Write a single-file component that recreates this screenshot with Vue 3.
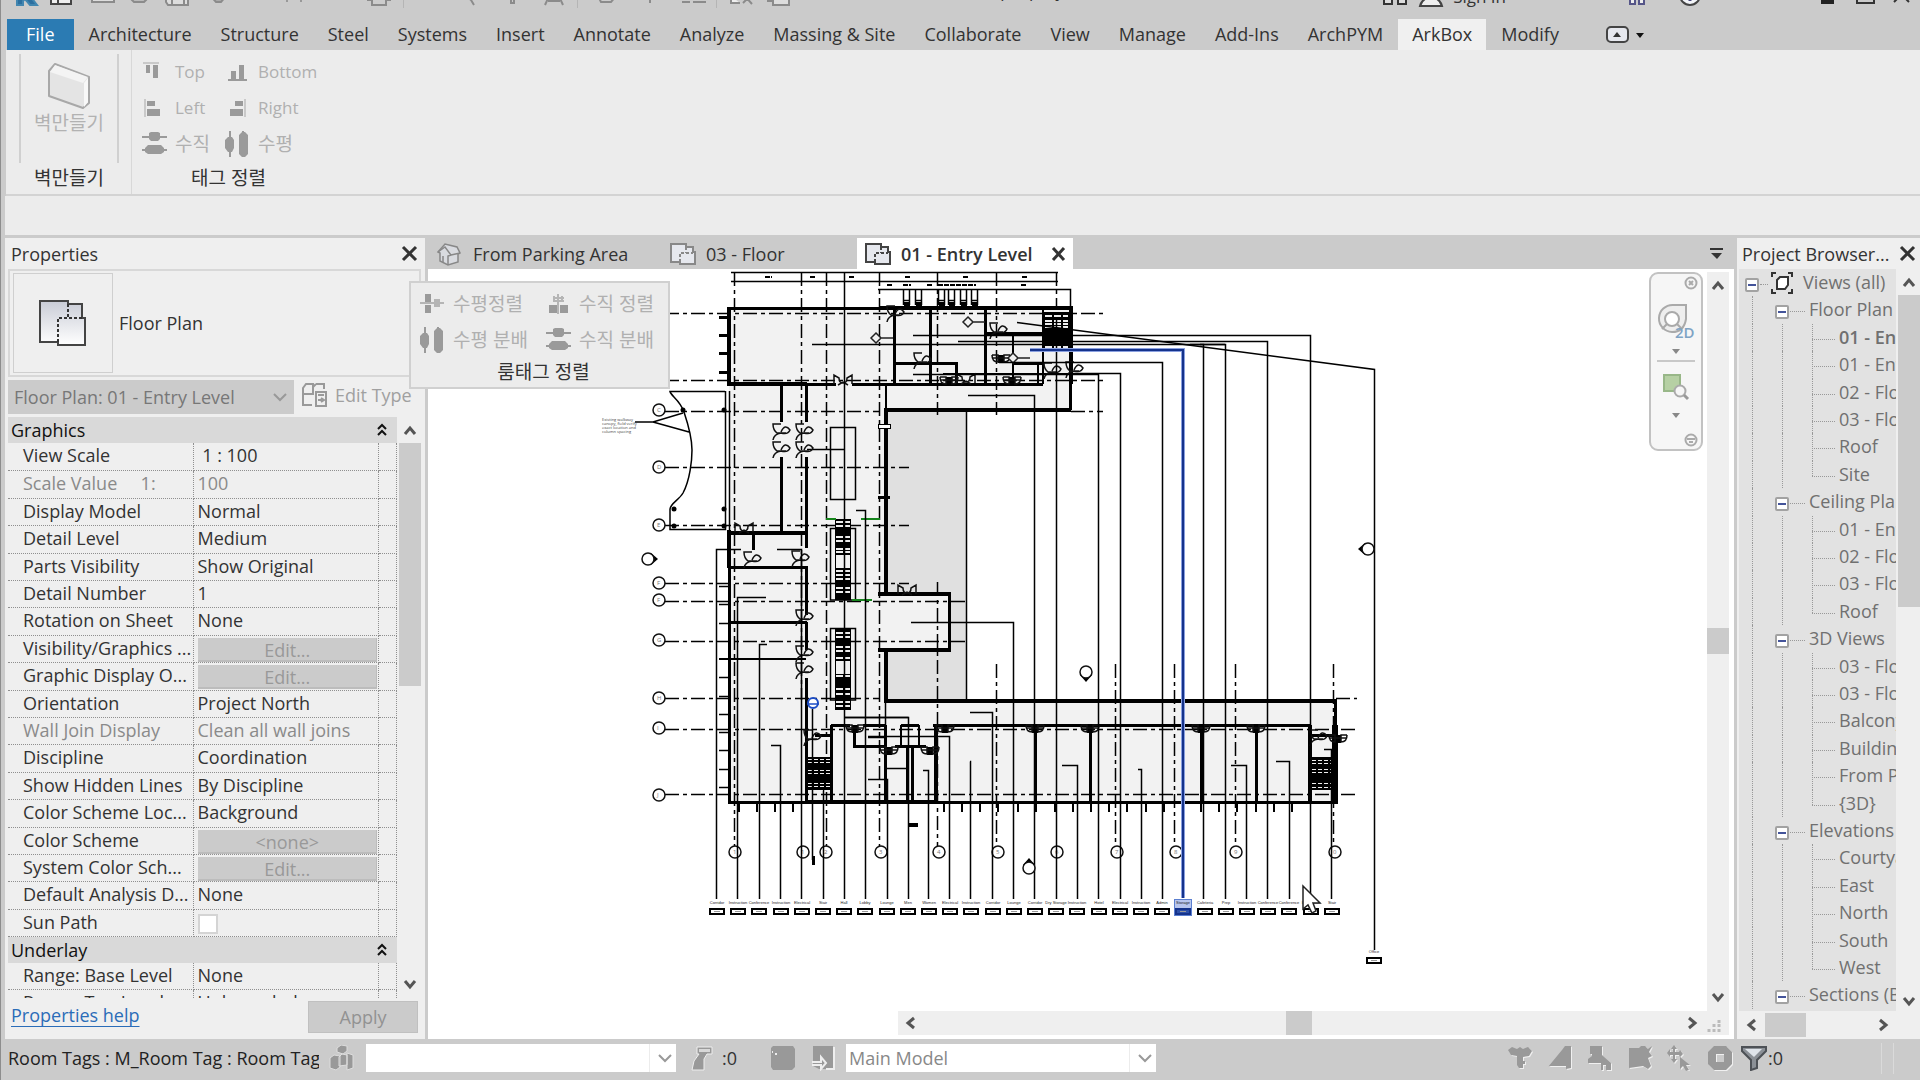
<template>
  <div class="window">
    <header class="titlebar">
      <div class="titlebar-row">
        <div class="quick-access">
          <button v-for="tool in quickTools" :key="tool.name" type="button" class="quick-button" :class="{ divided: tool.divided }"
            :style="{ width: tool.width + 'px' }" :aria-label="tool.name">
            <svg width="26" height="22" viewBox="0 0 26 22"><path :d="tool.path" :fill="tool.fill || 'none'" :stroke="tool.stroke || '#8b8b8b'" stroke-width="2" /></svg>
          </button>
        </div>
        <span class="doc-name">sample project</span>
        <div class="account">
          <button type="button" class="quick-button" aria-label="Search">
            <svg width="26" height="22" viewBox="0 0 26 22"><path d="M2 6h8v14H2zM16 6h8v14h-8zM10 9h6" fill="#ddd" stroke="#333" stroke-width="2" /></svg>
          </button>
          <button type="button" class="quick-button sign-in">
            <svg width="26" height="22" viewBox="0 0 26 22"><path d="M2 20q2-7 8-8a5 5 0 1 1 6 0q6 1 8 8z" fill="#eee" stroke="#444" stroke-width="2" /></svg>
            <span>Sign In</span>
          </button>
        </div>
        <div class="window-tools">
          <button type="button" class="quick-button" aria-label="App store">
            <svg width="18" height="22" viewBox="0 0 18 22"><path d="M2 8h5v10H2zM11 8h5v10h-5z" fill="#eee" stroke="#558" stroke-width="2" /></svg>
          </button>
          <button type="button" class="quick-button help" aria-label="Help">
            <svg width="24" height="22" viewBox="0 0 24 22"><circle cx="12" cy="9" r="10" fill="#f2f4f8" stroke="#444" stroke-width="2" /><path d="M12 12v3" stroke="#447" stroke-width="3" /></svg>
          </button>
          <button type="button" class="quick-button" aria-label="Minimize">
            <svg width="20" height="22" viewBox="0 0 20 22"><path d="M1 14h13v4H1z" fill="#222" /></svg>
          </button>
          <button type="button" class="quick-button" aria-label="Restore">
            <svg width="20" height="22" viewBox="0 0 20 22"><path d="M1 4h17v13H1z" fill="none" stroke="#333" stroke-width="2" /></svg>
          </button>
          <button type="button" class="quick-button" aria-label="Close">
            <svg width="20" height="22" viewBox="0 0 20 22"><path d="M2 1l15 15M17 1L2 16" stroke="#333" stroke-width="2" /></svg>
          </button>
        </div>
      </div>
    </header>

    <nav class="ribbon-tabs">
      <button type="button" class="ribbon-tab file">File</button>
      <button v-for="tab in ribbonTabs" :key="tab" type="button" class="ribbon-tab" :class="{ active: tab === activeTab }" @click="activeTab = tab">{{ tab }}</button>
      <button type="button" class="ribbon-collapse" aria-label="Collapse ribbon">
        <svg width="38" height="18" viewBox="0 0 38 18">
          <rect x="1" y="1" width="21" height="15" rx="4" fill="#e6e8ee" stroke="#444" stroke-width="2" />
          <path d="M7 11l4-5 4 5z" fill="#333" /><path d="M30 7h8l-4 5z" fill="#111" />
        </svg>
      </button>
    </nav>

    <section class="ribbon">
      <div class="ribbon-panel wall-panel">
        <button type="button" class="big-tool">
          <svg width="44" height="48" viewBox="0 0 44 48">
            <path d="M2 9l6-7 34 13v26l-6 5L2 34z" fill="#e4e4e4" stroke="#a8a8a8" stroke-width="2" stroke-linejoin="round" />
            <path d="M3 10l5-7 33 12-5 6z" fill="#f4f4f4" /><path d="M37 21l4-5v24l-4 5z" fill="#f8f8f8" />
          </svg>
          <span>벽만들기</span>
        </button>
        <p class="panel-title">벽만들기</p>
      </div>
      <div class="ribbon-panel align-panel">
        <div class="tool-grid">
          <button v-for="tool in alignTools" :key="tool.label" type="button" class="small-tool">
            <svg width="26" height="26" viewBox="0 0 26 26"><path :d="icons[tool.icon]" fill="#9a9a9a" /><path :d="thinLines[tool.icon]" stroke="#a6a6a6" stroke-width="1" /></svg>
            <span :class="{ korean: tool.korean }">{{ tool.label }}</span>
          </button>
        </div>
        <p class="panel-title">태그 정렬</p>
      </div>
    </section>
    <div class="options-bar"></div>

    <div class="workspace">
      <aside class="properties">
        <div class="panel-header">
          <h2>Properties</h2>
          <button type="button" aria-label="Close properties"><svg width="18" height="18" viewBox="0 0 18 18"><path d="M2 2l13 13M15 2L2 15" stroke="#333" stroke-width="3" /></svg></button>
        </div>
        <div class="type-selector">
          <button type="button" class="type-preview" aria-label="Type preview">
            <svg width="50" height="50" viewBox="0 0 50 50">
              <defs><linearGradient id="sheet" x2="0" y2="1"><stop stop-color="#c9ccd6" /><stop offset="1" stop-color="#fff" /></linearGradient></defs>
              <path d="M2 3h28v3h14v14h3v27H20v-3H2z" fill="url(#sheet)" stroke="#444" stroke-width="2" />
              <path d="M30 6v14M20 44V20h24" fill="none" stroke="#333" stroke-width="2" stroke-dasharray="3 2" />
            </svg>
          </button>
          <span>Floor Plan</span>
        </div>
        <div class="instance-row">
          <div class="select-box instance">
            <select v-model="instance" aria-label="Instance" disabled><option>Floor Plan: 01 - Entry Level</option></select>
            <svg width="14" height="9" viewBox="0 0 14 9"><path d="M1 1l6 6 6-6" fill="none" stroke="#999" stroke-width="2" /></svg>
          </div>
          <button type="button" class="edit-type" disabled>
            <svg width="26" height="26" viewBox="0 0 26 26" fill="none" stroke="#999" stroke-width="2"><path d="M12 2H4L1 6v17h9M1 12h10V3M14 2h8v5M11 5l3-3" /><path d="M14 10h10v14H14zM16 13h6M16 18h6m-3-2l3 2-3 2" /></svg>
            Edit Type
          </button>
        </div>
        <div class="property-area">
          <div class="property-list">
            <table v-for="group in propertyGroups" :key="group.name">
              <colgroup><col class="col-name"><col><col class="col-link"></colgroup>
              <thead>
                <tr><th colspan="3"><span>{{ group.name }}</span>
                  <svg width="12" height="14" viewBox="0 0 12 14"><path d="M2 6l4-4 4 4M2 12l4-4 4 4" fill="none" stroke="#111" stroke-width="2" /></svg></th></tr>
              </thead>
              <tbody>
                <tr v-for="row in group.rows" :key="row[0]" :class="{ locked: row[2] === 'locked' }">
                  <td class="name">{{ row[0] }}</td>
                  <td class="value">
                    <button v-if="row[2] === 'button'" type="button" disabled>{{ row[1] }}</button>
                    <input v-else-if="row[2] === 'check'" type="checkbox" :aria-label="row[0]">
                    <template v-else>{{ row[1] }}</template>
                  </td>
                  <td></td>
                </tr>
              </tbody>
            </table>
          </div>
          <div class="scroll-v">
            <button type="button" aria-label="Scroll up"><svg width="14" height="12" viewBox="0 0 14 12"><path :d="chevrons.up" class="chevron" /></svg></button>
            <div class="track"><div class="thumb properties-thumb"></div></div>
            <button type="button" aria-label="Scroll down"><svg width="14" height="12" viewBox="0 0 14 12"><path :d="chevrons.down" class="chevron" /></svg></button>
          </div>
        </div>
        <div class="properties-footer">
          <a href="#">Properties help</a>
          <button type="button" disabled>Apply</button>
        </div>
      </aside>

      <main class="view-area">
        <div class="doc-tabs">
          <button v-for="doc in documents" :key="doc.name" type="button" class="doc-tab" :class="[doc.kind, { active: doc.active }]">
            <svg v-if="doc.kind === 'house'" width="25" height="24" viewBox="0 0 25 24" stroke="#888" stroke-width="1.5"><path d="M2 10l7-8 12 3 3 6-2 1v8l-10 3-8-4v-8z" fill="#d9dbe0" /><path d="M2 10l7-5 6 8-3 1v9M15 13l9-2M7 14v6" fill="none" /></svg>
            <svg v-else width="26" height="22" viewBox="0 0 26 22" :stroke="doc.active ? '#444' : '#888'" stroke-width="2"><path d="M1 1h15v3h7v5h2v12H10v-2H1z" fill="#e6e8ee" /><path d="M16 4v6M10 19v-9h13" fill="none" stroke-dasharray="3 2" /></svg>
            <span>{{ doc.name }}</span>
            <svg v-if="doc.active" class="tab-close" width="16" height="16" viewBox="0 0 16 16"><path d="M2 2l11 12M13 2L2 14" stroke="#333" stroke-width="3" /></svg>
          </button>
          <button type="button" class="tab-menu" aria-label="Open views"><svg width="14" height="12" viewBox="0 0 14 12"><path d="M0 1h13" stroke="#333" stroke-width="2" /><path d="M1 5h11l-5 6z" fill="#333" /></svg></button>
        </div>

        <div class="canvas-row">
          <div class="canvas">
            <svg class="plan" width="1278" height="742" viewBox="428 269 1278 742" shape-rendering="crispEdges">
              <path d="M729 308H1071V410H886V593H949V650H886V700H1336V802H729z" fill="#f2f2f2" />
              <path d="M886 410h80v290h-80v-50h63v-57h-63z" fill="#e0e0e0" />
              <path d="M966.500 410v290" class="thin" />
              <!-- column grid -->
              <path v-for="d in gridLines" :key="d" :d="d" class="grid-line" />
              <g v-for="b in bubbles" :key="b.x + '-' + b.y" shape-rendering="auto">
                <circle :cx="b.x" :cy="b.y" r="6" class="bubble" /><text :x="b.x - 2" :y="b.y + 2" class="bubble-text">{{ b.t }}</text>
              </g>
              <!-- walls -->
              <path class="wall-4" d="M880 308H1071V384M729 307V385M727 383.5H807M729 530V568M727 533H808M884 409.5H1071M886 408V594M878 593.5H951M878 649.5H951M886 649V702M884 700.5H1337M936 725V803M1310 725V803M805 802H935" />
              <path class="wall-3" d="M729 308H880M1070 384V410M729 568V803M728 802H1336M807 384.500H836M852 384.500H1043M781 385V422M781 457V532M806 385V422M806 457V548M753 533V550M728 567H808M806 567V615M729 622H807M806 622V650M806 678V803M949 593V650M1335 700V726M933 725.500H1311M1035 725V802M1090 725V802M1201 725V802M1256 725V802M831 725V802M831 725.500H850M863 725.500H885M885 725V802M854 725V746H885M895 746H926M907 747V802M912 747V802M901 725.500H919M815 735H831M1310 735H1336" />
              <path class="wall-3" d="M894 308V384M930.500 308V384M985.500 308V384M985 333.500H1043M894 363.500H956V384M1013 363.500H1043" />
              <path class="wall-2" d="M1043 308V384M1013 333V384M1038 364V384M943 373.500H1099M719 659H806M885.500 385V410M901 725V746M919 725V746" />
              <path d="M1335 725V804" stroke="#000" stroke-width="6" />
              <!-- mullions -->
              <path v-for="y in [317, 335, 353, 372]" :key="'a' + y" :d="`M719 ${y}H730`" class="wall-3" />
              <path v-for="y in leftTicks" :key="'b' + y" :d="`M719 ${y}.5H729`" class="thin" />
              <path v-for="x in bottomTicks" :key="'c' + x" :d="`M${x} 803V812`" class="wall-2" />
              <!-- balcony -->
              <g shape-rendering="auto">
                <path d="M725 391.500H670C671 396 680 400 684 412S692 440 692 450S690 480 683 493C679 500 671 503 670 509V529.500H725.500V391M729.500 391V530M635 422H653L683 413M653 422L689 432" class="thin" />
                <circle v-for="p in anchors" :key="p.join()" :cx="p[0]" :cy="p[1]" r="2.500" />
                <text x="602" y="421" class="note">Existing walkway</text><text x="602" y="425" class="note">canopy, field verify</text>
                <text x="602" y="429" class="note">exact location and</text><text x="602" y="433" class="note">column spacing</text>
              </g>
              <!-- dimension strings -->
              <path class="thin" d="M731 272.500H1058M731 281.500H1058M878 289.500H1070.500V308M830.500 427.500H855.500V499.500H830.500zM830.500 528.500H855.500V600H830.500zM830.500 628.500H855.500V700H830.500zM807 449.500H844M885.500 700V725M868 737.500H885M885 768.500H907" />
              <path class="wall-2" d="M765 277h7M810 277h6M849 277h6M905 277h6M963 277h6M1022 277h6M887 285h5M903 285h8M927 285h5M938 285h38M1021 285h6" stroke-dasharray="5 1" />
              <g v-for="x in windowTags" :key="'w' + x"><path :d="`M${x}.5 289v16M${x + 6}.5 289v16M${x} 300.500h7`" class="thin" /><path :d="`M${x + 1} 302h6v4h-6z`" /></g>
              <!-- stairs and escalators -->
              <g v-for="s in stairs" :key="s.x + '-' + s.y">
                <rect :x="s.x" :y="s.y" :width="s.w" :height="s.h" />
                <path v-for="n in s.gaps" :key="n" :d="`M${s.x + 1} ${s.y + n}h${s.w - 2}`" stroke="#eee" :stroke-width="s.fine ? 1 : 2" :stroke-dasharray="s.fine ? '4 2' : '7 2'" />
                <rect v-if="s.landing" :x="s.x + 1" :y="s.y + s.landing" :width="s.w - 2" height="13" fill="#f2f2f2" />
              </g>
              <path d="M826 519h10M861 519h19M852 600h20" stroke="#16851c" stroke-width="2" />
              <rect x="878" y="424" width="12" height="4" fill="#fff" stroke="#000" stroke-width="1" />
              <path d="M878 497h12" class="wall-3" />
              <path d="M909 825h9" stroke="#000" stroke-width="4" />
              <path d="M813 856v9" stroke="#000" stroke-width="3" />
              <!-- doors -->
              <g shape-rendering="auto">
                <path v-for="p in doorPairs" :key="p.join()" class="door" :d="`M${p[0] - 9} ${p[1] + 3}v-9l5 3q0 5 4 5q4 0 4-5l5-3v9M${p[0] - 5} ${p[1] + 4}l5-3 5 3`" />
                <path v-for="p in sideDoors" :key="p.join()" class="door" :d="`M${p[0]} ${p[1] - 7}h-8q0 6 4 9h9M${p[0]} ${p[1] + 1}q4-9 9-2q-2 5-9 3q-7 1-8 7`" />
                <g v-for="p in doorKnots" :key="p.join()">
                  <path :d="`M${p[0] - 3} ${p[1] - 3}h6v8h-6z`" /><path class="door" :d="`M${p[0] - 9} ${p[1] - 3}h6v7q-6 0-6-7M${p[0] + 9} ${p[1] - 3}h-6v7q6 0 6-7M${p[0] - 9} ${p[1]}h18`" />
                </g>
                <path v-for="p in diamonds" :key="p.join()" :d="`M${p[0]} ${p[1] - 5}l5 5-5 5-5-5zM${p[0] + 5} ${p[1]}h12`" fill="#f2f2f2" stroke="#222" stroke-width="1.500" />
              </g>
              <!-- leaders -->
              <path v-for="l in leaders" :key="l.x" :d="`M${l.from} ${l.y}.5H${l.x}V899`" class="thin" />
              <path d="M844.500 272V899M812.500 709V860M812 344.500H1225M844.500 717.500H908.500" class="thin" />
              <path d="M1017 322.500L1374.500 369.500V950" class="thin" />
              <path d="M1030 350H1183V898" class="picked-halo" />
              <path d="M1030 350H1183V898" class="picked-leader" />
              <!-- elevation marks -->
              <g shape-rendering="auto">
                <g v-for="m in elevations" :key="m.turn" :transform="`translate(${m.x} ${m.y}) rotate(${m.turn})`"><path d="M3-6l7 6-7 6z" /><circle r="6" class="bubble" /></g>
                <circle cx="813" cy="703" r="5" fill="#fff" stroke="#1c4cc4" stroke-width="2" /><path d="M807 704h12" stroke="#1c4cc4" stroke-width="1.500" />
              </g>
              <!-- room tags -->
              <rect x="1174" y="899" width="17" height="16" fill="#b8c6ee" stroke="#5b7fd0" stroke-width="1" />
              <g v-for="tag in roomTags" :key="tag.x">
                <text :x="tag.x" :y="tag.y" class="room-name">{{ tag.name }}</text>
                <rect :x="tag.x - 7" :y="tag.y + 5" width="14" height="5" class="room-box" :class="{ picked: tag.picked }" />
                <path :d="`M${tag.x - 3} ${tag.y + 7.500}h6`" stroke="#999" stroke-width="1" />
              </g>
              <path d="M1303 886v23l5-4 4 8 4-2-3-8h7z" fill="#fff" stroke="#222" stroke-width="1.500" shape-rendering="auto" />
            </svg>

            <div class="nav-bar">
              <button type="button" class="nav-corner" aria-label="Close navigation bar"><svg width="14" height="14" viewBox="0 0 14 14" fill="none" stroke="#aaa" stroke-width="2"><circle cx="7" cy="7" r="5.500" /><path d="M5 5l4 4M9 5L5 9" /></svg></button>
              <button type="button" class="nav-tool" aria-label="Steering wheel">
                <svg width="40" height="38" viewBox="0 0 40 38"><path d="M17 2h13v14q-2 13-14 13A13 13 0 0 1 17 2z" fill="#eee" stroke="#aaa" stroke-width="2" /><circle cx="16" cy="16" r="7" fill="#fff" stroke="#aaa" stroke-width="2" /><path d="M11 21l-5 5M21 21l4 4" stroke="#aaa" stroke-width="2" /><text x="19" y="35" class="nav-2d">2D</text></svg>
              </button>
              <svg width="8" height="5" viewBox="0 0 8 5"><path d="M0 0h8L4 5z" fill="#888" /></svg>
              <hr>
              <button type="button" class="nav-tool" aria-label="Zoom region">
                <svg width="28" height="28" viewBox="0 0 28 28"><path d="M2 2h16v16H2z" fill="#b6d0a4" stroke="#98b788" stroke-width="2" /><circle cx="18" cy="18" r="5.500" fill="#f6f6f6" stroke="#aaa" stroke-width="2" /><path d="M22 22l4 4" stroke="#999" stroke-width="3" /></svg>
              </button>
              <svg width="8" height="5" viewBox="0 0 8 5"><path d="M0 0h8L4 5z" fill="#888" /></svg>
              <button type="button" class="nav-corner last" aria-label="Navigation options"><svg width="14" height="14" viewBox="0 0 14 14" fill="none" stroke="#aaa" stroke-width="2"><circle cx="7" cy="7" r="5.500" /><path d="M3 6h8M5 9h4" /></svg></button>
            </div>
          </div>
          <div class="scroll-v canvas-scroll">
            <button type="button" aria-label="Scroll up"><svg width="14" height="12" viewBox="0 0 14 12"><path :d="chevrons.up" class="chevron" /></svg></button>
            <div class="track"><div class="thumb canvas-thumb"></div></div>
            <button type="button" aria-label="Scroll down"><svg width="14" height="12" viewBox="0 0 14 12"><path :d="chevrons.down" class="chevron" /></svg></button>
          </div>
        </div>
        <div class="canvas-bottom">
          <div class="scroll-h">
            <button type="button" aria-label="Scroll left"><svg width="12" height="14" viewBox="0 0 12 14"><path :d="chevrons.left" class="chevron" /></svg></button>
            <div class="track"><div class="thumb"></div></div>
            <button type="button" aria-label="Scroll right"><svg width="12" height="14" viewBox="0 0 12 14"><path :d="chevrons.right" class="chevron" /></svg></button>
          </div>
          <svg class="grip" width="14" height="14" viewBox="0 0 14 14" fill="#bbb"><path d="M10 1h3v3h-3zM5 5h3v3H5zM10 5h3v3h-3zM0 10h3v3H0zM5 10h3v3H5zM10 10h3v3h-3z" /></svg>
        </div>

        <div class="floating-panel">
          <div class="floating-tools">
            <button v-for="tool in roomTagTools" :key="tool.label" type="button" class="small-tool">
              <svg width="26" height="26" viewBox="0 0 26 26"><path :d="icons[tool.icon]" fill="#9a9a9a" /><path :d="thinLines[tool.icon]" stroke="#b5b5b5" stroke-width="2" /></svg>
              <span class="korean">{{ tool.label }}</span>
            </button>
          </div>
          <p class="panel-title">룸태그 정렬</p>
        </div>
      </main>

      <aside class="browser">
        <div class="panel-header">
          <h2>Project Browser...</h2>
          <button type="button" aria-label="Close project browser"><svg width="18" height="18" viewBox="0 0 18 18"><path d="M2 2l13 13M15 2L2 15" stroke="#333" stroke-width="3" /></svg></button>
        </div>
        <div class="browser-body">
          <div class="browser-main">
            <ul class="tree">
              <li v-for="(node, i) in tree" :key="i" :class="['level-' + node.level, { current: node.current }]">
                <span v-for="n in node.level" :key="n" class="guide"></span>
                <span class="branch" :class="{ leaf: node.level === 2, end: node.end }">
                  <button v-if="node.level < 2" type="button" class="expander" aria-label="Collapse"></button>
                </span>
                <svg v-if="node.level === 0" width="22" height="22" viewBox="0 0 22 22" fill="none" stroke="#333" stroke-width="2"><path d="M1 5V1h4M17 1h4v4M21 17v4h-4M5 21H1v-4" /><path d="M6 8l3-3h8v8l-3 4H6z" fill="#fff" /></svg>
                <span class="label">{{ node.name }}</span>
              </li>
            </ul>
            <div class="scroll-h browser-scroll-h">
              <button type="button" aria-label="Scroll left"><svg width="12" height="14" viewBox="0 0 12 14"><path :d="chevrons.left" class="chevron" /></svg></button>
              <div class="track"><div class="thumb"></div></div>
              <button type="button" aria-label="Scroll right"><svg width="12" height="14" viewBox="0 0 12 14"><path :d="chevrons.right" class="chevron" /></svg></button>
            </div>
          </div>
          <div class="scroll-v">
            <button type="button" aria-label="Scroll up"><svg width="14" height="12" viewBox="0 0 14 12"><path :d="chevrons.up" class="chevron" /></svg></button>
            <div class="track"><div class="thumb browser-thumb"></div></div>
            <button type="button" aria-label="Scroll down"><svg width="14" height="12" viewBox="0 0 14 12"><path :d="chevrons.down" class="chevron" /></svg></button>
          </div>
        </div>
      </aside>
    </div>

    <footer class="status-bar">
      <span class="hint">Room Tags : M_Room Tag : Room Tag</span>
      <svg width="26" height="26" viewBox="0 0 26 26" fill="#999" stroke="#ddd" stroke-width="1"><path d="M8 3l4-3 6 1v5l-4 3-6-2zM1 13l4-3 6 1v11l-4 3-6-2zM10 12l3-3 5 1v10l-8 1zM18 8l6 2v13l-6 2z" /></svg>
      <div class="select-box status-select">
        <select aria-label="Active workset"><option></option></select>
        <svg width="14" height="9" viewBox="0 0 14 9"><path d="M1 1l6 6 6-6" fill="none" stroke="#999" stroke-width="2" /></svg>
      </div>
      <div class="requests">
        <svg width="24" height="26" viewBox="0 0 24 26"><path d="M7 2h15v7h-5l-3 5v11H2l2-9 5-7H7z" fill="#999" stroke="#eee" stroke-width="1" /><path d="M9 4h11v3H9z" fill="#d8d8d8" /></svg>
        <span>:0</span>
      </div>
      <svg class="options-icon" width="26" height="26" viewBox="0 0 26 26"><path d="M3 1h20l2 3v18l-3 3H3l-2-3V3z" fill="#999" /><path d="M2 7h1M5 9h2" stroke="#eee" stroke-width="2" /></svg>
      <svg class="pick-icon" width="24" height="26" viewBox="0 0 24 26"><path d="M2 1h20v23H8l-6-3z" fill="#999" /><path d="M23 2v22h-8M1 17h9v-5l5 6-5 6v-4H1" fill="none" stroke="#eee" stroke-width="2" /></svg>
      <div class="select-box status-select">
        <select v-model="designOption" aria-label="Design option"><option>Main Model</option></select>
        <svg width="14" height="9" viewBox="0 0 14 9"><path d="M1 1l6 6 6-6" fill="none" stroke="#999" stroke-width="2" /></svg>
      </div>
      <div class="select-toggles">
        <button v-for="item in statusIcons" :key="item.name" type="button" :aria-label="item.name">
          <svg width="26" height="26" viewBox="0 0 26 26"><path :d="item.path" transform="translate(1 1)" fill="#f0f0f0" /><path :d="item.path" fill="#999" fill-rule="evenodd" /></svg>
        </button>
        <button type="button" class="filter">
          <svg width="26" height="26" viewBox="0 0 26 26"><path d="M1 2h24v4l-9 9v8l-6 2V15L1 6z" fill="#8b9096" stroke="#4d5156" stroke-width="2" /><path d="M4 4h17l-8 8z" fill="#dfe4ea" /></svg>
          <span>:0</span>
        </button>
      </div>
      <div class="status-grip"></div>
    </footer>
  </div>
</template>

<script setup>
import { ref } from "vue";

const activeTab = ref("ArkBox");
const instance = ref("Floor Plan: 01 - Entry Level");
const designOption = ref("Main Model");

const ribbonTabs = [
  "Architecture", "Structure", "Steel", "Systems", "Insert", "Annotate", "Analyze", "Massing & Site",
  "Collaborate", "View", "Manage", "Add-Ins", "ArchPYM", "ArkBox", "Modify",
];

const quickTools = [
  { name: "Revit", width: 36, path: "M4 2h6v7l6-7h5l-4 8 7 9h-7l-5-6-2 2v4H4z", fill: "#2c6f9f", stroke: "#4186b0" },
  { name: "Home", width: 34, path: "M3 3h20v15H3zM10 3v15", fill: "#eee", stroke: "#444" },
  { name: "Open", width: 50, path: "M2 3h22v13H2z", fill: "#ddd" },
  { name: "Save", width: 24, path: "M4 3h16v10l-3 3H7l-3-3z", fill: "#bbb" },
  { name: "Save As", width: 50, path: "M2 3h22v16H4l-2-3zM8 12h12v7H8z", fill: "#ddd" },
  { name: "Sync", width: 30, path: "M5 8l4-5h10l3 7-5 6h-5z", fill: "#aaa" },
  { name: "Undo", width: 123, path: "M6 13v3M20 13v3", stroke: "#999" },
  { name: "Print", width: 48, path: "M2 5h22v9h-4v5H6v-5H2zM6 12h14", fill: "#ccc" },
  { name: "Measure", width: 46, path: "M1 12h24M2 8v4", divided: true },
  { name: "Dimension", width: 44, path: "M9 11l4 3 3 5" },
  { name: "Tag", width: 38, path: "M12 10v7h3v-7" },
  { name: "Text", width: 46, path: "M4 19l6-13h6l6 13M7 15h12" },
  { name: "3D View", width: 57, path: "M4 8l4 8h10l5-6", fill: "#ccc", divided: true },
  { name: "Section", width: 38, path: "M10 11v6M10 13h7" },
  { name: "Thin Lines", width: 44, path: "M1 16h8M12 16h13M12 12h13" },
  { name: "Close Inactive", width: 51, path: "M2 10v7h9M14 17l8-8M15 9l8 9", fill: "#eee", divided: true },
  { name: "Switch", width: 22, path: "M8 10h16v9H8zM3 10v5h5", fill: "#ddd" },
];

// filled part of the alignment icons
const icons = {
  top: "M5 6h4v8H5zM12 6h5v13h-5z",
  bottom: "M7 12h5v8H7zM15 6h5v14h-5zM4 20h19v2H4z",
  left: "M6 6h8v5H6zM6 14h13v7H6z",
  right: "M11 6h8v5h-8zM6 14h13v7H6z",
  vertical: "M8 2l2-1h7l2 1v6l-2 2h-7l-2-2zM4 17l3-3h13l3 3v4l-3 2H7l-3-2zM1 5h25v2H1zM1 18h25v2H1z",
  horizontal: "M1 9l3-3h4l2 3v8l-2 4H4l-3-4zM5 0h2v26H5zM15 4l3-3h3l3 3v19l-3 3h-3l-3-3zM18 0h2v26h-2z",
  alignH: "M6 3h6v8H6zM6 14h6v8H6z",
  alignV: "M4 14h8v8H4zM15 14h8v8h-8z",
};
const thinLines = {
  top: "M2 4h16", left: "M4 4v18", right: "M21 4v18", alignH: "M1 12h24M16 8v8M18 8v8M20 8v8", alignV: "M13 3v20M9 5v6M17 5v6M8 7h11M8 10h11",
};
const alignTools = [
  { label: "Top", icon: "top" }, { label: "Bottom", icon: "bottom" },
  { label: "Left", icon: "left" }, { label: "Right", icon: "right" },
  { label: "수직", icon: "vertical", korean: true }, { label: "수평", icon: "horizontal", korean: true },
];
const roomTagTools = [
  { label: "수평정렬", icon: "alignH" }, { label: "수직 정렬", icon: "alignV" },
  { label: "수평 분배", icon: "horizontal" }, { label: "수직 분배", icon: "vertical" },
];
const chevrons = { up: "M2 10l5-6 5 6", down: "M2 2l5 6 5-6", left: "M9 2L3 7l6 5", right: "M3 2l6 5-6 5" };

const propertyGroups = [
  {
    name: "Graphics",
    rows: [
      ["View Scale", "\u00a01 : 100"],
      ["Scale Value\u00a0\u00a0\u00a0\u00a0\u00a01:", "100", "locked"],
      ["Display Model", "Normal"],
      ["Detail Level", "Medium"],
      ["Parts Visibility", "Show Original"],
      ["Detail Number", "1"],
      ["Rotation on Sheet", "None"],
      ["Visibility/Graphics ...", "Edit...", "button"],
      ["Graphic Display O...", "Edit...", "button"],
      ["Orientation", "Project North"],
      ["Wall Join Display", "Clean all wall joins", "locked"],
      ["Discipline", "Coordination"],
      ["Show Hidden Lines", "By Discipline"],
      ["Color Scheme Loc...", "Background"],
      ["Color Scheme", "<none>", "button"],
      ["System Color Sch...", "Edit...", "button"],
      ["Default Analysis D...", "None"],
      ["Sun Path", "", "check"],
    ],
  },
  { name: "Underlay", rows: [["Range: Base Level", "None"], ["Range: Top Level", "Unbounded"]] },
];

const documents = [
  { name: "From Parking Area", kind: "house" },
  { name: "03 - Floor", kind: "plan-tab" },
  { name: "01 - Entry Level", kind: "plan-tab", active: true },
];

const tree = [
  { level: 0, name: "Views (all)" },
  { level: 1, name: "Floor Plan" },
  { level: 2, name: "01 - Entry Level", current: true },
  { level: 2, name: "01 - Entry Level" },
  { level: 2, name: "02 - Floor" },
  { level: 2, name: "03 - Floor" },
  { level: 2, name: "Roof" },
  { level: 2, name: "Site", end: true },
  { level: 1, name: "Ceiling Plans" },
  { level: 2, name: "01 - Entry Level" },
  { level: 2, name: "02 - Floor" },
  { level: 2, name: "03 - Floor" },
  { level: 2, name: "Roof", end: true },
  { level: 1, name: "3D Views" },
  { level: 2, name: "03 - Floor" },
  { level: 2, name: "03 - Floor" },
  { level: 2, name: "Balcony" },
  { level: 2, name: "Building" },
  { level: 2, name: "From Parking" },
  { level: 2, name: "{3D}", end: true },
  { level: 1, name: "Elevations" },
  { level: 2, name: "Courtyard" },
  { level: 2, name: "East" },
  { level: 2, name: "North" },
  { level: 2, name: "South" },
  { level: 2, name: "West", end: true },
  { level: 1, name: "Sections (Building)" },
];

// floor plan geometry, in drawing units
const gridLines = [
  "M734.5 272V846", "M801.5 272V700", "M826.5 272V846", "M879.5 272V846", "M937.5 272V415", "M937.5 582V846",
  "M996.5 272V415", "M996.5 664V846", "M1056.5 272V308", "M1115.5 664V846", "M1174.5 664V846", "M1235.5 664V846", "M1333.5 664V846",
  "M665 313.5H1103", "M665 380.5H1103", "M665 411.5H880", "M1071 411.5H1103", "M665 467.5H909", "M665 525.5H909", "M665 583.5H909",
  "M665 601.5H965", "M665 641.5H965", "M665 698.5H880", "M1336 698.5H1357", "M665 729.5H1357", "M665 794.5H1357",
];
const bubbles = [
  ...[410, 467, 525, 583, 600, 640, 698, 728, 795].map((y, i) => ({ x: 659, y, t: "CDEFFGHIJ"[i] })),
  ...[735, 803, 826, 881, 939, 998, 1057, 1117, 1176, 1236, 1335].map((x, i) => ({ x, y: 852, t: "11234567890"[i] })),
];
const leftTicks = [586, 604, 623, 677, 696, 714, 732, 750, 769, 787];
const bottomTicks = [739, 757, 775, 793, 944, 962, 980, 998, 1018, 1036, 1055, 1073, 1091, 1109, 1127, 1146, 1164, 1201, 1219, 1237, 1256, 1274, 1292];
const anchors = [[683, 410], [724, 410], [674, 509], [674, 526], [724, 509], [724, 526]];
const windowTags = [903, 915, 938, 948, 960, 971];
const stairs = [
  { x: 835, y: 519, w: 16, h: 81, gaps: [3, 7, 18, 22, 30, 33, 52, 56, 60, 69, 73], landing: 36 },
  { x: 835, y: 629, w: 16, h: 81, gaps: [4, 8, 18, 22, 29, 47, 60, 65, 73, 77], landing: 32 },
  { x: 807, y: 757, w: 25, h: 33, gaps: [2, 5, 13, 16, 26, 29], fine: true },
  { x: 1044, y: 312, w: 25, h: 40, gaps: [4, 9, 12, 15, 35] },
  { x: 1311, y: 757, w: 22, h: 33, gaps: [3, 6, 12, 15, 26, 30], fine: true },
];
const doorPairs = [[843, 381], [744, 529], [907, 591], [966, 380]];
const sideDoors = [[781, 431], [781, 449], [804, 431], [804, 449], [752, 559], [800, 558], [804, 617], [804, 653], [804, 670], [812, 737], [895, 313], [922, 360], [998, 330], [1052, 370], [1074, 369], [1318, 737]];
const doorKnots = [[855, 728], [945, 728], [1035, 728], [1090, 728], [1201, 728], [1256, 728], [889, 750], [930, 750], [1338, 738], [949, 380], [1012, 380], [1001, 358]];
const diamonds = [[876, 338], [968, 322], [1013, 358]];

const leaders = [
  { x: 716.5, y: 549, from: 741 }, { x: 737.5, y: 597, from: 766 }, { x: 759.5, y: 644, from: 767 }, { x: 780.5, y: 745, from: 771 },
  { x: 801.5, y: 549, from: 777 }, { x: 823.5, y: 790, from: 823 }, { x: 865.5, y: 510, from: 856 }, { x: 887.5, y: 779, from: 868 },
  { x: 908.5, y: 717, from: 844 }, { x: 928.5, y: 770, from: 923 }, { x: 949.5, y: 736, from: 868 }, { x: 970.5, y: 761, from: 970 },
  { x: 992.5, y: 712, from: 970 }, { x: 1013.5, y: 622, from: 911 }, { x: 1034.5, y: 395, from: 968 }, { x: 1056.5, y: 320, from: 1056 },
  { x: 1077.5, y: 765, from: 1062 }, { x: 1098.5, y: 374, from: 913 }, { x: 1120.5, y: 373, from: 1070 }, { x: 1141.5, y: 769, from: 1138 },
  { x: 1162.5, y: 362, from: 999 }, { x: 1203.5, y: 344, from: 1190 }, { x: 1225.5, y: 344, from: 1200 }, { x: 1246.5, y: 765, from: 1231 },
  { x: 1267.5, y: 341, from: 958 }, { x: 1289.5, y: 761, from: 1276 }, { x: 1310.5, y: 335, from: 913 }, { x: 1331.5, y: 749, from: 1324 },
];
const elevations = [
  { x: 648, y: 559, turn: 0 }, { x: 1086, y: 672, turn: 90 }, { x: 1368, y: 549, turn: 180 }, { x: 1029, y: 868, turn: 270 },
];
const roomNames = [
  "Corridor", "Instruction", "Conference", "Instruction", "Electrical", "Stair", "Hall", "Lobby", "Lounge", "Men", "Women", "Electrical",
  "Instruction", "Corridor", "Lounge", "Corridor", "Dry Storage", "Instruction", "Hotel", "Electrical", "Instruction", "Admin", "Storage",
  "Cafeteria", "Prep", "Instruction", "Conference", "Conference", "Instruction", "Stair",
];
const roomTags = [
  ...roomNames.map((name, i) => ({ name, x: Math.round(717 + i * 21.2), y: 904, picked: i === 22 })),
  { name: "Office", x: 1374, y: 953 },
];

const statusIcons = [
  { name: "Select links", path: "M1 5l4-3 5 2 3-2 3 2 5-2 4 4-3 5-6 1v4h2v3h-2v4h-4l-2-3v-9l-6-1z" },
  { name: "Select underlay", path: "M1 22L15 5l3-4h6v22l-5 1v-3H2z" },
  { name: "Select pinned", path: "M3 1h12v9l9 8v7h-5v-5h-3v5h-2v-7H1v-4l4-3V9H3z" },
  { name: "Select by face", path: "M2 3h10l2-2h4l3 3 4-3-3 6 3 4-4 2 3 8-3 3-5-3-14 2z" },
  { name: "Drag on selection", path: "M7 0l3 4H8v3h4l1-2 3 4-3 3-1-2H8v4h2l-3 4-3-4h2v-4H3v2L0 8l3-4v3h3V4H4zM13 12l10 8h-4l3 5-3 1-3-5-3 3z" },
  { name: "Background processes", path: "M7 1h12l6 6v12l-6 6H7l-6-6V7zM9 9v8h8V9z" },
];
</script>

<style>
body {
  margin: 0;
}
</style>

<style scoped>
.window {
  height: 100vh;
  box-sizing: border-box;
  display: flex;
  flex-direction: column;
  overflow: hidden;
  border-left: 1px solid #8d8d8d;
  background: #cbcbcb;
  color: #333;
  font: 18px/26px "Open Sans", "Noto Sans CJK KR", sans-serif;
}

button, select, input {
  font: inherit;
  color: inherit;
}
button {
  padding: 0;
  border: 0;
  background: none;
}
svg {
  display: block;
  flex: none;
}
p, h2 {
  margin: 0;
}

.titlebar {
  height: 19px;
  flex: none;
  overflow: hidden;
}
.titlebar-row {
  height: 32px;
  margin-top: -19px;
  display: flex;
  align-items: center;
  font-size: 17px;
}
.quick-access {
  display: flex;
  padding-left: 7px;
  flex: none;
}
.quick-button {
  display: flex;
  justify-content: center;
  box-sizing: border-box;
}
.quick-button.divided {
  border-left: 1px solid #b5b5b5;
}
.doc-name {
  flex: 1;
  align-self: flex-start;
  padding-left: 178px;
  line-height: 20px;
}
.account {
  display: flex;
  gap: 10px;
  margin-right: 122px;
}
.sign-in {
  align-items: center;
  gap: 9px;
}
.window-tools {
  display: flex;
  gap: 16px;
  padding-right: 8px;
}
.window-tools .help {
  margin: 0 102px 0 16px;
}

.ribbon-tabs {
  display: flex;
  flex: none;
  height: 31px;
  gap: 1px;
  padding-left: 6px;
}
.ribbon-tab {
  padding: 0 14px 2px;
  line-height: 28px;
}
.ribbon-tab.file {
  padding: 0 19px 2px;
  background: #2b7bb3;
  color: #fff;
}
.ribbon-tab.active {
  background: #f0f0f0;
}
.ribbon-collapse {
  margin-left: 32px;
}

.ribbon {
  flex: none;
  display: flex;
  height: 144px;
  margin-left: 5px;
  border-bottom: 2px solid #d3d3d3;
  background: #ececec;
}
.ribbon-panel {
  display: flex;
  flex-direction: column;
  justify-content: space-between;
  align-items: center;
  box-sizing: border-box;
  padding: 4px 12px 2px;
}
.wall-panel {
  padding-left: 13px;
  border-right: 1px solid #d8d8d8;
}
.align-panel {
  padding-left: 9px;
}
.big-tool {
  display: flex;
  flex-direction: column;
  align-items: center;
  width: 100px;
  box-sizing: border-box;
  height: 109px;
  padding-top: 8px;
  border: solid #d0d0d0;
  border-width: 0 2px;
  color: #b2b2b2;
  font-size: 19px;
}
.panel-title {
  font-size: 19px;
  line-height: 28px;
  text-align: center;
}
.tool-grid {
  display: grid;
  grid-template-columns: 83px 92px;
  grid-auto-rows: 36px;
}
.small-tool {
  display: flex;
  align-items: center;
  gap: 8px;
  color: #b0b0b0;
  font-size: 17px;
  white-space: nowrap;
}
.korean {
  font-size: 19px;
}

.options-bar {
  flex: none;
  height: 39px;
  margin-left: 4px;
  border-bottom: 3px solid #cbcbcb;
  background: #ececec;
}

.workspace {
  flex: 1;
  min-height: 0;
  display: flex;
  gap: 3px;
  padding-left: 4px;
}
.panel-header {
  display: flex;
  flex: none;
  height: 31px;
  justify-content: space-between;
  align-items: center;
  padding: 0 6px;
}
.panel-header h2 {
  font: inherit;
  white-space: nowrap;
}

.properties {
  width: 420px;
  flex: none;
  display: flex;
  flex-direction: column;
  background: #efefef;
}
.type-selector {
  display: flex;
  align-items: center;
  gap: 6px;
  margin: 0 4px 0 3px;
  padding: 2px 3px;
  border: 2px solid #d8d8d8;
}
.type-preview {
  display: grid;
  place-items: center;
  width: 100px;
  height: 100px;
  box-sizing: border-box;
  border: 1px solid #cfcfcf;
}
.instance-row {
  display: flex;
  gap: 8px;
  padding: 3px;
}
.select-box {
  position: relative;
}
.select-box select {
  appearance: none;
  width: 100%;
  height: 100%;
  box-sizing: border-box;
  padding: 0 30px 0 6px;
  border: 0;
  border-radius: 0;
  background: #fff;
  opacity: 1;
}
.select-box svg {
  position: absolute;
  right: 7px;
  top: 50%;
  margin-top: -4px;
  pointer-events: none;
}
.instance {
  width: 286px;
  height: 34px;
}
.instance select {
  background: #cbcbcb;
  color: #777;
}
.edit-type {
  display: flex;
  align-items: center;
  height: 30px;
  gap: 7px;
  color: #a0a0a0;
}
.property-area {
  flex: 1;
  min-height: 0;
  display: flex;
  gap: 2px;
  margin: 0 4px 0 3px;
}
.property-list {
  flex: 1;
  overflow: hidden;
}
.property-list table {
  width: 100%;
  table-layout: fixed;
  border-collapse: collapse;
}
.col-name {
  width: 185px;
}
.col-link {
  width: 18px;
}
.property-list th {
  height: 26px;
  padding: 0 9px 0 3px;
  background: #d9d9d9;
  color: #111;
  font-weight: normal;
  text-align: left;
}
.property-list th span {
  float: left;
}
.property-list th svg {
  float: right;
  margin-top: 6px;
}
.property-list td {
  box-sizing: border-box;
  height: 27px;
  padding: 0;
  border: dotted #8f8f8f;
  border-width: 0 1px 1px 0;
  line-height: 24px;
  vertical-align: top;
  white-space: nowrap;
  overflow: hidden;
}
.property-list tr:nth-child(5n + 2) td,
.property-list tr:nth-child(5n + 4) td {
  height: 28px;
}
.property-list .name {
  padding-left: 15px;
}
.property-list .value {
  padding-left: 4px;
}
.property-list .locked {
  color: #8a8a8a;
}
.property-list td button {
  display: block;
  width: 100%;
  height: 24px;
  margin-top: 2px;
  background: #cbcbcb;
  box-shadow: inset -1px -2px #bcbcbc;
  color: #999;
  line-height: 24px;
}
.property-list td:has(button) {
  padding: 0 1px 0 2px;
}
.property-list input {
  appearance: none;
  display: block;
  width: 20px;
  height: 20px;
  margin: 4px 0 0;
  border: 2px solid #d4d4d4;
  background: #fff;
}
.properties-footer {
  display: flex;
  flex: none;
  justify-content: space-between;
  box-sizing: border-box;
  height: 41px;
  padding: 3px 7px 0 6px;
}
.properties-footer a {
  height: 28px;
  color: #2a6cb8;
  line-height: 28px;
  text-underline-offset: 4px;
}
.properties-footer button {
  width: 110px;
  height: 32px;
  border: 1px solid #c0c0c0;
  background: #cbcbcb;
  color: #929292;
}

.scroll-v {
  display: flex;
  flex-direction: column;
  flex: none;
  width: 22px;
  background: #efefef;
}
.scroll-v button, .scroll-h button {
  flex: none;
  display: grid;
  place-items: center;
}
.scroll-v button {
  height: 26px;
}
.scroll-h {
  display: flex;
  height: 24px;
  background: #efefef;
}
.scroll-h button {
  width: 26px;
}
.track {
  flex: 1;
  display: flex;
}
.scroll-v .track {
  flex-direction: column;
}
.thumb {
  background: #cbcbcb;
}
.chevron {
  fill: none;
  stroke: #555;
  stroke-width: 3;
}
.properties-thumb {
  height: 46%;
}

.view-area {
  position: relative;
  flex: 1;
  min-width: 0;
  display: flex;
  flex-direction: column;
  background: #fff;
}
.doc-tabs {
  flex: none;
  display: flex;
  height: 31px;
  background: #cbcbcb;
}
.doc-tab {
  display: flex;
  align-items: center;
  gap: 12px;
  white-space: nowrap;
}
.doc-tab.house {
  width: 234px;
  padding-left: 8px;
}
.doc-tab.plan-tab {
  width: 195px;
  padding-left: 8px;
  gap: 10px;
}
.doc-tab.active {
  width: 216px;
  padding-right: 6px;
  background: #fff;
  font-weight: 600;
}
.tab-close {
  margin-left: auto;
}
.tab-menu {
  margin: 0 10px 0 auto;
}
.canvas-row {
  flex: 1;
  min-height: 0;
  display: flex;
}
.canvas {
  position: relative;
  flex: 1;
  min-width: 0;
  overflow: hidden;
}
.canvas-scroll {
  margin: 3px 5px 0 0;
}
.canvas-thumb {
  height: 26px;
  margin-top: 330px;
}
.canvas-bottom {
  display: flex;
  flex: none;
  height: 28px;
  padding-left: 36%;
}
.canvas-bottom .scroll-h {
  flex: 1;
}
.canvas-bottom .thumb {
  width: 26px;
  margin-left: 48%;
}
.grip {
  width: 24px;
  padding: 8px 5px 2px 0;
  box-sizing: border-box;
  height: 24px;
  margin-right: 5px;
  background: #efefef;
}

.thin {
  fill: none;
  stroke: #000;
  stroke-width: 1.5;
  shape-rendering: auto;
}
.picked-halo, .picked-leader {
  fill: none;
  stroke: #8aa0e0;
  stroke-width: 4;
}
.picked-leader {
  stroke: #15338c;
  stroke-width: 2;
}
.wall-2, .wall-3, .wall-4 {
  fill: none;
  stroke: #000;
  stroke-width: 2;
}
.wall-3 {
  stroke-width: 3;
}
.wall-4 {
  stroke-width: 4;
}
.grid-line {
  fill: none;
  stroke: #000;
  stroke-width: 1.5;
  stroke-dasharray: 14 4 4 4;
  shape-rendering: auto;
}
.bubble {
  fill: #fff;
  stroke: #111;
  stroke-width: 1.5;
}
.door {
  fill: none;
  stroke: #111;
  stroke-width: 1.5;
}
.bubble-text {
  fill: #777;
  font-size: 6px;
}
.note {
  fill: #444;
  font-size: 4px;
}
.room-name {
  fill: #222;
  font: 4px "Liberation Sans", sans-serif;
  text-anchor: middle;
}
.room-box {
  fill: #fff;
  stroke: #000;
  stroke-width: 1.5;
}
.room-box.picked {
  fill: #2d50a8;
  stroke: #15338c;
}

.nav-bar {
  position: absolute;
  top: 3px;
  right: 4px;
  display: flex;
  flex-direction: column;
  align-items: center;
  width: 54px;
  height: 179px;
  box-sizing: border-box;
  border: 2px solid #c2c2c2;
  border-radius: 9px;
  background: #f6f6f6;
}
.nav-bar hr {
  width: 38px;
  margin: 6px 0 11px;
  border: 0;
  border-top: 2px solid #c8c8c8;
}
.nav-corner {
  align-self: flex-end;
  padding: 2px 3px;
}
.nav-corner.last {
  margin-top: auto;
}
.nav-tool {
  margin: 11px 0 8px;
}
.nav-bar hr + .nav-tool {
  margin-top: 0;
  margin-bottom: 12px;
}
.nav-2d {
  fill: #7ea3c4;
  font-size: 15px;
  font-weight: 600;
}

/* torn-off ribbon panel */
.floating-panel {
  position: absolute;
  left: -19px;
  top: 43px;
  width: 261px;
  height: 108px;
  box-sizing: border-box;
  padding-left: 8px;
  border: 2px solid #d0d0d0;
  background: #ececec;
}
.floating-tools {
  display: grid;
  grid-template-columns: 126px 1fr;
  grid-auto-rows: 36px;
  padding-top: 3px;
}

.browser {
  width: 183px;
  flex: none;
  display: flex;
  flex-direction: column;
  background: #efefef;
}
.browser .panel-header {
  padding: 0 3px 0 5px;
}
.browser-body {
  flex: 1;
  min-height: 0;
  display: flex;
  gap: 2px;
}
.browser-body > .scroll-v {
  margin-bottom: 24px;
}
.browser-thumb {
  height: 45%;
}
.browser-main {
  flex: 1;
  min-width: 0;
  display: flex;
  flex-direction: column;
  padding-left: 2px;
}
.browser-scroll-h {
  margin: 2px 0 2px;
}
.browser-scroll-h .thumb {
  width: 41px;
}
.tree {
  flex: 1;
  min-height: 0;
  margin: 0;
  padding: 0 0 0 13px;
  list-style: none;
  overflow: hidden;
  background: #e2e2e2;
  color: #707070;
}
.tree li {
  display: flex;
  height: 27px;
  white-space: nowrap;
}
.tree li:nth-child(5n + 2), .tree li:nth-child(5n + 4) {
  height: 28px;
}
.guide {
  flex: none;
  width: 29px;
  border-left: 1px dotted #999;
}
.branch {
  position: relative;
  flex: none;
  width: 27px;
  box-sizing: border-box;
}
.branch::after {
  content: "";
  position: absolute;
  left: 8px;
  right: 4px;
  top: 15px;
  border-top: 1px dotted #999;
}
.branch.leaf::before {
  content: "";
  position: absolute;
  left: 0;
  top: 0;
  bottom: 0;
  border-left: 1px dotted #999;
}
.branch.leaf.end::before {
  bottom: 12px;
}
.branch.leaf::after {
  left: 0;
}
.expander {
  position: absolute;
  left: -7px;
  top: 9px;
  width: 14px;
  height: 14px;
  border: 2px solid #a2a2a2;
  border-radius: 2px;
  background: linear-gradient(#44549a, #44549a) center / 8px 2px no-repeat #fff;
}
.level-0 .branch {
  width: 19px;
}
.level-0 svg {
  margin: 3px 10px 0 0;
}
.level-0 .branch::after {
  right: 3px;
}
.current .label {
  font-weight: 600;
}

.status-bar {
  flex: none;
  display: flex;
  align-items: center;
  height: 41px;
  box-sizing: border-box;
  padding: 0 26px 3px 7px;
  background: #cbcbcb;
}
.hint {
  width: 311px;
  margin-right: 10px;
  overflow: hidden;
  white-space: nowrap;
  color: #222;
}
.status-select {
  width: 310px;
  height: 28px;
  margin-left: 11px;
}
.status-select select {
  padding-left: 3px;
  color: #888;
}
.status-select svg {
  right: 4px;
}
.status-select::after {
  content: "";
  position: absolute;
  right: 26px;
  top: 0;
  bottom: 0;
  border-left: 1px solid #ececec;
}
.requests {
  display: flex;
  gap: 8px;
  margin-left: 14px;
}
.options-icon {
  margin: 0 15px 0 33px;
}
.select-toggles {
  display: flex;
  gap: 14px;
  margin-left: auto;
}
.select-toggles .filter {
  display: flex;
  gap: 1px;
  margin-left: -6px;
}
.status-grip {
  width: 11px;
  height: 31px;
  margin-left: 98px;
  border: solid #dadada;
  border-width: 0 1px;
}
</style>
